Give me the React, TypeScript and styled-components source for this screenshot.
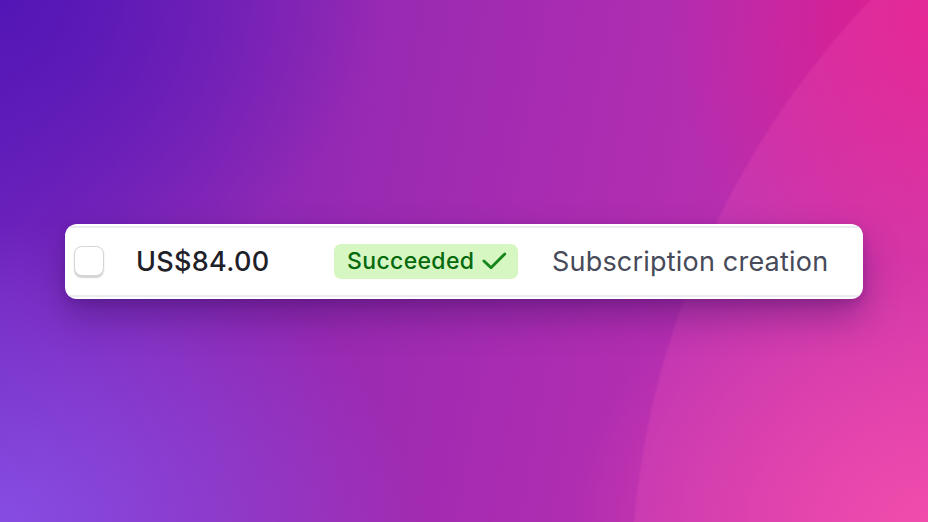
import React from "react";
import styled, { createGlobalStyle } from "styled-components";

const GlobalStyle = createGlobalStyle`
  html, body {
    margin: 0;
    padding: 0;
    width: 100%;
    height: 100%;
  }
  body {
    font-family: Inter, "Noto Sans", "Liberation Sans", sans-serif;
    -webkit-font-smoothing: antialiased;
  }
  #root {
    height: 100%;
  }
`;

const Stage = styled.main`
  width: 928px;
  height: 522px;
  display: flex;
  align-items: center;
  justify-content: center;
  overflow: hidden;
  background:
    radial-gradient(circle at 1500px 600px, rgba(250, 90, 185, 0.3) 0, rgba(250, 90, 185, 0.2) 868px, rgba(250, 90, 185, 0) 871px),
    radial-gradient(ellipse 420px 300px at 0px 522px, rgba(140, 90, 240, 0.75), rgba(140, 90, 240, 0)),
    radial-gradient(ellipse 380px 300px at 0px 0px, rgba(80, 20, 180, 0.9), rgba(80, 20, 180, 0)),
    radial-gradient(ellipse 260px 300px at 928px 20px, rgba(228, 24, 136, 0.85), rgba(228, 24, 136, 0)),
    radial-gradient(ellipse 360px 260px at 928px 522px, rgba(250, 80, 170, 0.75), rgba(250, 80, 170, 0)),
    linear-gradient(100deg, #6c24bf 0%, #9a2ab2 40%, #b52eb0 72%, #cc2fa4 100%);
`;

const Card = styled.section`
  width: 798px;
  background: #ffffff;
  border-radius: 12px;
  padding: 2px 0;
  overflow: hidden;
  box-shadow: 0 18px 36px rgba(50, 10, 90, 0.38), 0 4px 10px rgba(50, 10, 90, 0.2);
`;

const Row = styled.div`
  height: 67px;
  display: flex;
  align-items: center;
  border-top: 2px solid #ebebf1;
  border-bottom: 2px solid #ebebf1;
  padding: 0 37px 0 9px;
`;

const Checkbox = styled.span`
  box-sizing: border-box;
  flex: none;
  width: 30px;
  height: 30px;
  border-radius: 8px;
  background: #ffffff;
  border: 1.5px solid #d4d5da;
  box-shadow: 0 1.5px 1.5px rgba(0, 0, 0, 0.18);
  margin-right: 32px;
`;

const Amount = styled.span`
  flex: none;
  width: 198px;
  font-size: 27px;
  font-weight: 450;
  color: #1f2129;
  letter-spacing: 0.3px;
`;

const BadgeCell = styled.span`
  flex: none;
  width: 218px;
  display: flex;
`;

const Badge = styled.span`
  box-sizing: border-box;
  height: 35px;
  width: 184px;
  display: inline-flex;
  align-items: center;
  gap: 8px;
  padding: 0 11px 0 13px;
  border-radius: 7px;
  background: #d7f7c2;
  color: #05690d;
  font-size: 23px;
  font-weight: 500;
  letter-spacing: 0.35px;
`;

const Description = styled.span`
  flex: 1;
  font-size: 27px;
  font-weight: 400;
  color: #474a59;
  letter-spacing: 0.2px;
  white-space: nowrap;
`;

const CheckIcon = () => (
  <svg width="26" height="20" viewBox="0 0 26 20" fill="none">
    <path d="M2 10 L9.5 17 L24 2.5" stroke="#17861c" strokeWidth="3" strokeLinecap="round" strokeLinejoin="round" />
  </svg>
);

export default function App() {
  return (
    <>
      <GlobalStyle />
      <Stage>
        <Card>
          <Row>
            <Checkbox />
            <Amount>US$84.00</Amount>
            <BadgeCell>
              <Badge>
                Succeeded
                <CheckIcon />
              </Badge>
            </BadgeCell>
            <Description>Subscription creation</Description>
          </Row>
        </Card>
      </Stage>
    </>
  );
}
